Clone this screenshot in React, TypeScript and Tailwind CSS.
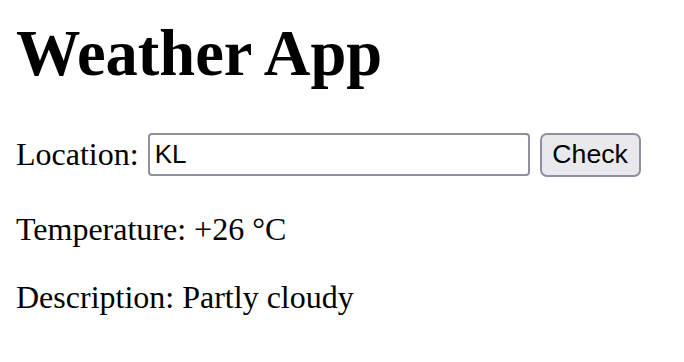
export default function App() {
  return (
    <div className="min-h-[362px] bg-white px-4 pt-[17px] text-black font-['Liberation_Serif',serif]">
      <h1 className="text-[64.5px] font-bold leading-[73.5px]">Weather App</h1>

      <div className="mt-[42px] flex h-[46px] items-start text-[32px] leading-[36.8px]">
        <span className="mt-[3px]">Location:</span>
        <input
          defaultValue="KL"
          className="ml-[9px] h-[43px] w-[382px] rounded-[4px] border-2 border-[#8f8f9d] bg-white px-[5px] font-['Liberation_Sans',Arial,sans-serif] text-[26px] leading-none text-black outline-none"
        />
        <button className="ml-[10px] h-[44px] w-[101px] rounded-[7px] border-2 border-[#8f8f9d] bg-[#e9e9ed] font-['Liberation_Sans',Arial,sans-serif] text-[26.67px] leading-none text-black">
          Check
        </button>
      </div>

      <p className="mt-8 text-[32px] leading-[36.8px]">Temperature: +26 °C</p>
      <p className="mt-8 text-[32px] leading-[36.8px]">Description: Partly cloudy</p>
    </div>
  );
}
